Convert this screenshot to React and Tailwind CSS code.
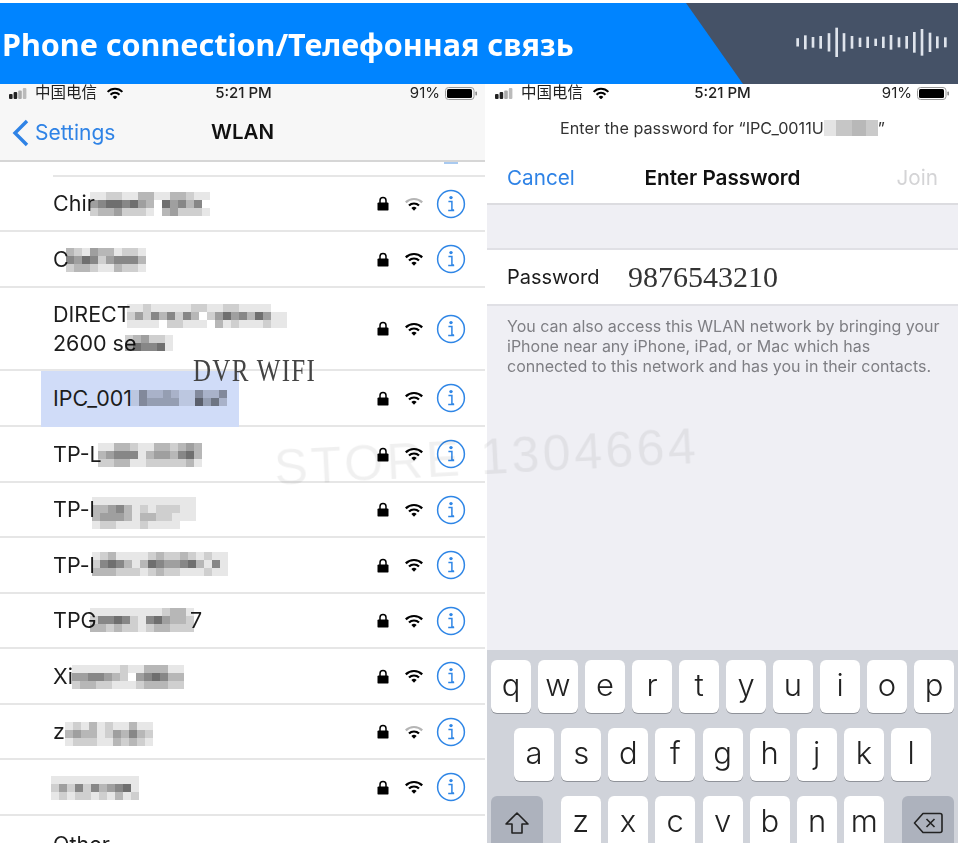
import React from "react";

const IOS = { fontFamily: "Inter, 'Noto Sans CJK SC', sans-serif" };

const ROWS = [
  { h: 55, label: "Chir", faint: true, m: { x: 90, y: 15, c: ["112211331133211", "456656430645350", "233422210342221"] } },
  { h: 56, label: "C", m: { x: 66, y: 16, c: ["3214331221", "5465245553", "2332113221"] } },
  {
    h: 83,
    label: "DIRECT",
    line2: "2600 se",
    m: { x: 127, y: 16, c: ["11211111221122111100", "24253525302464536411", "11110221110312111211"] },
    m2: { x: 125, y: 47, s: 8, c: ["234221", "465561"] },
  },
  { h: 56, label: "IPC_001", highlight: true, m: { x: 131, y: 19, s: 8, c: ["142232114224", "143333116352"] } },
  { h: 56, label: "TP-L", m: { x: 98, y: 16, c: ["1133211332343", "3455513443563", "2233112222231"] } },
  { h: 55, label: "TP-l", m: { x: 92, y: 14, c: ["1111111111111", "3345312122211", "3444313322111", "1221112111100"] } },
  { h: 56, label: "TP-l", m: { x: 92, y: 14, c: ["12311112322321211", "25653136544563151", "33322212322111211"] } },
  { h: 55, label: "TPG", tail: "7", m: { x: 90, y: 14, c: ["1111111112331", "2556521564332", "3323221233222"] } },
  { h: 56, label: "Xi", m: { x: 72, y: 16, c: ["11111121133311", "44554320456533", "23322111233322"] } },
  { h: 55, label: "z", faint: true, m: { x: 65, y: 17, c: ["12131211311", "34331243532", "12221132321"] } },
  { h: 56, label: "", m: { x: 51, y: 16, c: ["11111111111", "24252534561", "12122121312"] } },
  { h: 56, label: "Other", last: true },
];

function Mosaic({ x, y, c, s = 8 }) {
  return (
    <div className="absolute flex flex-col mix-blend-multiply blur-[0.6px]" style={{ left: x, top: y }}>
      {c.map((r, i) => (
        <div key={i} className="flex">
          {r.split("").map((d, j) => {
            const g = 255 - Number(d) * 24;
            return <div key={j} style={{ width: s, height: s, background: `rgb(${g},${g},${g})` }} />;
          })}
        </div>
      ))}
    </div>
  );
}

function Wifi({ faint, className = "text-black", w = 20 }) {
  return (
    <svg width={w} height={w * 0.7} viewBox="0 0 20 14" fill="none" className={className}>
      <path d="M1.8 5.4 A11.6 11.6 0 0 1 18.2 5.4" stroke={faint ? "#b5b5b5" : "currentColor"} strokeWidth="2.2" />
      <path d="M5 8.6 A7 7 0 0 1 15 8.6" stroke="currentColor" strokeWidth="2.2" />
      <path d="M7.4 11 A3.6 3.6 0 0 1 12.6 11 L10 13.8 Z" fill="currentColor" />
    </svg>
  );
}

function Lock() {
  return (
    <svg width="12" height="15" viewBox="0 0 12 15" fill="none">
      <path d="M3 7 V4.4 A3 3 0 0 1 9 4.4 V7" stroke="#000" strokeWidth="1.5" />
      <rect x="0.5" y="6.4" width="11" height="8.2" rx="1.2" fill="#000" />
    </svg>
  );
}

function Info() {
  return (
    <svg width="30" height="30" viewBox="0 0 30 30" fill="none">
      <circle cx="15" cy="15" r="13.4" stroke="#2f86e6" strokeWidth="1.5" />
      <circle cx="15" cy="8.6" r="1.7" fill="#2f86e6" />
      <path d="M12.4 12.6 H15.9 V21 H18 M12.2 21.4 H18.2" stroke="#2f86e6" strokeWidth="1.5" />
    </svg>
  );
}

function Battery() {
  return (
    <svg width="33" height="13" viewBox="0 0 33 13" fill="none">
      <rect x="0.5" y="0.5" width="28.5" height="12" rx="3" stroke="#9a9a9a" />
      <rect x="2" y="2" width="25" height="9" rx="1.5" fill="#000" />
      <rect x="30.4" y="4.5" width="1.6" height="4" rx="0.8" fill="#8a8a8a" />
    </svg>
  );
}

function Signal() {
  return (
    <svg width="21" height="13" viewBox="0 0 21 13">
      <rect x="0" y="7" width="3.6" height="5" rx="1" fill="#222" />
      <rect x="4.6" y="5" width="3.6" height="7" rx="1" fill="#222" />
      <rect x="9.2" y="3.5" width="3.6" height="8.5" rx="1" fill="#aaa" />
      <rect x="13.8" y="1" width="3.6" height="11" rx="1" fill="#bbb" />
    </svg>
  );
}

function StatusBar({ pl, pr }) {
  return (
    <div className="grid h-[18px] shrink-0 grid-cols-[1fr_auto_1fr] items-center text-[#222]" style={{ ...IOS, paddingLeft: pl, paddingRight: pr }}>
      <div className="flex items-center gap-[5px]">
        <Signal />
        <span className="text-[15.5px] leading-[18px]">中国电信</span>
        <span className="ml-[4px]"><Wifi w={18} /></span>
      </div>
      <div className="text-[15px] font-medium leading-[18px]">5:21 PM</div>
      <div className="flex items-center justify-end gap-[5px]">
        <span className="text-[15px] leading-[18px]">91%</span>
        <Battery />
      </div>
    </div>
  );
}

function NetRow({ row }) {
  return (
    <div
      className={`relative flex shrink-0 items-center pl-[53px] text-[21.5px] text-[#1c1c1c] ${row.last ? "" : "border-b-2 border-[#e6e6e6]"}`}
      style={{ height: row.h }}
    >
      {row.highlight && <div className="absolute bottom-[-2px] left-[41px] top-0 w-[198px] bg-[#d0dcf8]" />}
      <div className="relative leading-[29px]">
        <div>{row.label}</div>
        {row.line2 && <div>{row.line2}</div>}
      </div>
      {row.tail && <span className="absolute left-[190px]">{row.tail}</span>}
      {row.m && <Mosaic {...row.m} />}
      {row.m2 && <Mosaic {...row.m2} />}
      {!row.last && (
        <div className="absolute right-[19px] top-0 flex h-full items-center">
          <span className="mr-[15px]"><Lock /></span>
          <span className="mr-[12px]"><Wifi faint={row.faint} /></span>
          <Info />
        </div>
      )}
    </div>
  );
}

function Key({ k }) {
  return (
    <div className="flex h-[53px] w-[40px] shrink-0 items-center justify-center rounded-[6px] bg-white pb-[2px] text-[31px] font-light text-[#222] shadow-[0_1px_0_#8f9299]" style={IOS}>
      {k}
    </div>
  );
}

const WAVE = [
  [53, 25], [76, 42], [99, 32], [122, 38], [147, 55], [170, 88], [192, 55], [216, 38], [240, 28], [263, 34],
  [287, 22], [310, 34], [333, 44], [357, 30], [380, 38], [403, 62], [426, 80], [450, 58], [472, 36], [496, 30],
];

export default function App() {
  return (
    <div className="flex h-[849px] w-[958px] flex-col overflow-hidden bg-white pt-[3px]">
      <header className="relative flex h-[81px] shrink-0 items-center justify-between overflow-hidden bg-[#0084ff] pl-[2px]">
        <div className="absolute inset-0 bg-[#455267] [clip-path:polygon(686px_0,958px_0,958px_81px,743px_81px)]" />
        <h1 className="relative pt-[1px] text-[30.5px] font-bold leading-none text-white" style={{ fontFamily: "'Noto Sans', sans-serif" }}>
          Phone connection/Телефонная связь
        </h1>
        <svg width="178" height="50" viewBox="0 0 534 150" className="relative">
          {WAVE.map(([x, h]) => (
            <rect key={x} x={x - 4} y={70 - h / 2} width="8" height={h} fill="#dfe4ec" />
          ))}
        </svg>
      </header>

      <main className="relative flex h-[759px] shrink-0 overflow-hidden" style={IOS}>
        {/* WLAN list */}
        <section className="flex w-[485px] shrink-0 flex-col">
          <div className="bg-[#f7f7f7]">
            <StatusBar pl={9} pr={7} />
            <div className="grid h-[60px] grid-cols-[1fr_auto_1fr] items-center border-b-2 border-[#d6d6d6] pl-[12px] pt-[3px]">
              <div className="flex items-center gap-[6px] text-[21px] text-[#2f83e6]">
                <svg width="17" height="28" viewBox="0 0 17 28" fill="none">
                  <path d="M15 2 L3 14 L15 26" stroke="#2f83e6" strokeWidth="3.4" />
                </svg>
                <span>Settings</span>
              </div>
              <div className="-ml-[12px] text-[20.5px] font-semibold text-[#111]">WLAN</div>
              <div />
            </div>
          </div>
          <div className="ml-[53px] h-[15px] shrink-0 border-b-2 border-[#e6e6e6]">
            <div className="ml-[391px] h-[2px] w-[14px] bg-[#a9caf0]" />
          </div>
          {ROWS.map((r, i) => (
            <NetRow key={i} row={r} />
          ))}
        </section>

        {/* Password */}
        <section className="ml-[2px] flex flex-1 flex-col bg-white">
          <StatusBar pl={8} pr={8} />
          <div className="flex h-[51px] shrink-0 items-center justify-center pt-[1px] text-[16.2px] text-[#333]">
            <span>Enter the password for “IPC_0011U</span>
            <span className="flex h-[16px] w-[54px]">
              <span className="w-[12px] bg-[#e4e4e4]" />
              <span className="w-[16px] bg-[#c6c6c6]" />
              <span className="w-[14px] bg-[#b8b8b8]" />
              <span className="w-[12px] bg-[#cacaca]" />
            </span>
            <span>”</span>
          </div>
          <div className="grid h-[52px] shrink-0 grid-cols-[1fr_auto_1fr] items-center border-b-2 border-[#dcdce0] px-[20px] text-[20.7px]">
            <span className="text-[#2f83e6]">Cancel</span>
            <span className="font-semibold text-[#111]">Enter Password</span>
            <span className="justify-self-end text-[#d4d4d6]">Join</span>
          </div>
          <div className="h-[45px] shrink-0 border-b-2 border-[#e0e0e5] bg-[#efeff4]" />
          <div className="flex h-[56px] shrink-0 items-center border-b-2 border-[#e0e0e5] pl-[20px]">
            <span className="w-[121px] text-[20px] text-[#1c1c1c]">Password</span>
            <span className="text-[30px] leading-none text-[#333]" style={{ fontFamily: "'Liberation Serif', serif" }}>9876543210</span>
          </div>
          <div className="flex-1 bg-[#efeff4] pl-[20px] pt-[10px] text-[16px] leading-[20px] text-[#7e7e83]">
            <p>You can also access this WLAN network by bringing your</p>
            <p>iPhone near any iPhone, iPad, or Mac which has</p>
            <p>connected to this network and has you in their contacts.</p>
          </div>
          <div className="h-[193px] shrink-0 overflow-hidden bg-[#d0d3da] pt-[10px]">
            <div className="flex justify-between px-[4px]">
              {"qwertyuiop".split("").map((k) => <Key key={k} k={k} />)}
            </div>
            <div className="mt-[15px] flex justify-between px-[27px]">
              {"asdfghjkl".split("").map((k) => <Key key={k} k={k} />)}
            </div>
            <div className="mt-[15px] flex justify-between px-[4px]">
              <div className="flex h-[53px] w-[52px] items-center justify-center rounded-[6px] bg-[#adb2bd]">
                <svg width="26" height="24" viewBox="0 0 26 24" fill="none">
                  <path d="M13 2 L24 13 H18 V22 H8 V13 H2 Z" stroke="#222" strokeWidth="1.6" strokeLinejoin="round" />
                </svg>
              </div>
              <div className="flex gap-[7.25px]">
                {"zxcvbnm".split("").map((k) => <Key key={k} k={k} />)}
              </div>
              <div className="flex h-[53px] w-[52px] items-center justify-center rounded-[6px] bg-[#adb2bd]">
                <svg width="30" height="22" viewBox="0 0 30 22" fill="none">
                  <path d="M10 1.5 H27 A2 2 0 0 1 29 3.5 V18.5 A2 2 0 0 1 27 20.5 H10 L1.5 11 Z" stroke="#222" strokeWidth="1.6" strokeLinejoin="round" />
                  <path d="M13.5 7 L21.5 15 M21.5 7 L13.5 15" stroke="#222" strokeWidth="1.6" />
                </svg>
              </div>
            </div>
          </div>
        </section>

        {/* Watermarks */}
        <div className="pointer-events-none absolute left-[274px] top-[348px] -rotate-3 whitespace-nowrap text-[50px] leading-none tracking-[3.5px] text-[#000]/[0.06]" style={{ fontFamily: "'Liberation Sans', sans-serif" }}>
          STORE 1304664
        </div>
        <div className="pointer-events-none absolute left-[193px] top-[272px] scale-y-[1.25] whitespace-nowrap text-[25px] leading-[30px] tracking-[1.3px] text-[#444]" style={{ fontFamily: "'Liberation Serif', serif" }}>
          DVR WIFI
        </div>
      </main>
    </div>
  );
}
